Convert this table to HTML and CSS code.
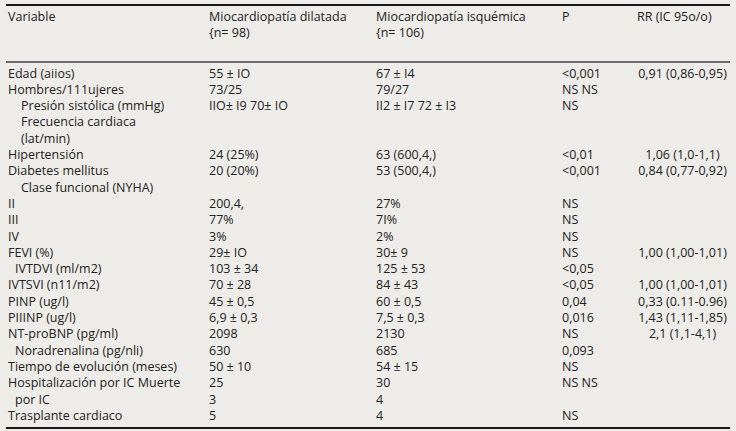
FILE: index.html
```html
<!DOCTYPE html>
<html lang="es">
<head>
<meta charset="utf-8">
<title>Tabla</title>
<link rel="stylesheet" href="styles.css">
</head>
<body>
<table class="tbl">
  <colgroup>
    <col class="c1"><col class="c2"><col class="c3"><col class="c4"><col class="c5">
  </colgroup>
  <thead>
    <tr>
      <th>Variable</th>
      <th>Miocardiopatía dilatada<br>{n= 98)</th>
      <th>Miocardiopatía isquémica<br>{n= 106)</th>
      <th>P</th>
      <th>RR (IC 95o/o)</th>
    </tr>
  </thead>
  <tbody>
    <tr class="first"><td>Edad (aiios)</td><td>55 ± IO</td><td>67 ± I4</td><td>&lt;0,001</td><td class="rr">0,91 (0,86-0,95)</td></tr>
    <tr><td>Hombres/111ujeres</td><td>73/25</td><td>79/27</td><td>NS NS</td><td class="rr"></td></tr>
    <tr><td class="ind1">Presión sistólica (mmHg)</td><td>IIO± I9 70± IO</td><td>II2 ± I7 72 ± I3</td><td>NS</td><td class="rr"></td></tr>
    <tr><td class="ind1">Frecuencia cardiaca<br>(lat/min)</td><td></td><td></td><td></td><td class="rr"></td></tr>
    <tr><td>Hipertensión</td><td>24 (25%)</td><td>63 (600,4,)</td><td>&lt;0,01</td><td class="rr">1,06 (1,0-1,1)</td></tr>
    <tr><td>Diabetes mellitus</td><td>20 (20%)</td><td>53 (500,4,)</td><td>&lt;0,001</td><td class="rr">0,84 (0,77-0,92)</td></tr>
    <tr><td class="ind1">Clase funcional (NYHA)</td><td></td><td></td><td></td><td class="rr"></td></tr>
    <tr><td>II</td><td>200,4,</td><td>27%</td><td>NS</td><td class="rr"></td></tr>
    <tr><td>III</td><td>77%</td><td>7I%</td><td>NS</td><td class="rr"></td></tr>
    <tr><td>IV</td><td>3%</td><td>2%</td><td>NS</td><td class="rr"></td></tr>
    <tr><td>FEVI (%)</td><td>29± IO</td><td>30± 9</td><td>NS</td><td class="rr">1,00 (1,00-1,01)</td></tr>
    <tr><td class="ind2">IVTDVI (ml/m2)</td><td>103 ± 34</td><td>125 ± 53</td><td>&lt;0,05</td><td class="rr"></td></tr>
    <tr><td>IVTSVI (n11/m2)</td><td>70 ± 28</td><td>84 ± 43</td><td>&lt;0,05</td><td class="rr">1,00 (1,00-1,01)</td></tr>
    <tr><td>PINP (ug/l)</td><td>45 ± 0,5</td><td>60 ± 0,5</td><td>0,04</td><td class="rr">0,33 (0.11-0.96)</td></tr>
    <tr><td>PIIINP (ug/l)</td><td>6,9 ± 0,3</td><td>7,5 ± 0,3</td><td>0,016</td><td class="rr">1,43 (1,11-1,85)</td></tr>
    <tr><td>NT-proBNP (pg/ml)</td><td>2098</td><td>2130</td><td>NS</td><td class="rr">2,1 (1,1-4,1)</td></tr>
    <tr><td class="ind2">Noradrenalina (pg/nli)</td><td>630</td><td>685</td><td>0,093</td><td class="rr"></td></tr>
    <tr><td>Tiempo de evolución (meses)</td><td>50 ± 10</td><td>54 ± 15</td><td>NS</td><td class="rr"></td></tr>
    <tr><td>Hospitalización por IC Muerte</td><td>25</td><td>30</td><td>NS NS</td><td class="rr"></td></tr>
    <tr><td class="ind2">por IC</td><td>3</td><td>4</td><td></td><td class="rr"></td></tr>
    <tr class="last"><td>Trasplante cardiaco</td><td>5</td><td>4</td><td>NS</td><td class="rr"></td></tr>
  </tbody>
</table>
</body>
</html>
```
FILE: styles.css
```css
html, body {
  margin: 0;
  padding: 0;
  background: #edece8;
}
body {
  padding: 4px 6px 0 6px;
  font-family: "Open Sans", "Noto Sans", sans-serif;
  font-size: 12.5px;
  color: #222222;
}
.tbl {
  width: 724px;
  border-collapse: collapse;
  border-top: 2px solid #1a1a1a;
  border-bottom: 2px solid #1a1a1a;
  table-layout: fixed;
}
.c1 { width: 201px; }
.c2 { width: 167px; }
.c3 { width: 186px; }
.c4 { width: 75px; }
.c5 { width: 95px; }
th, td {
  text-align: left;
  font-weight: normal;
  vertical-align: top;
  padding: 0 0 0 2px;
  line-height: 16.3px;
  white-space: nowrap;
}
thead th {
  padding-top: 3px;
  padding-bottom: 19px;
  border-bottom: 2px solid #6a6a6a;
}
tbody tr.first td { padding-top: 3px; }
tbody tr.last td { padding-bottom: 3px; }
td.ind1 { padding-left: 15px; }
td.ind2 { padding-left: 9px; }
td.rr { text-align: center; padding-left: 0; }
```
